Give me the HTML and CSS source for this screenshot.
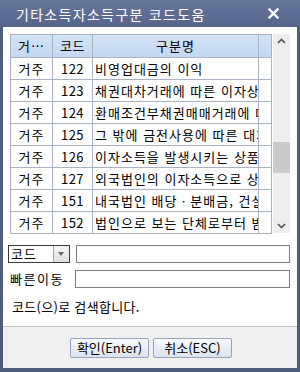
FILE: index.html
```html
<!DOCTYPE html>
<html lang="ko">
<head>
<meta charset="utf-8">
<link rel="stylesheet" href="styles.css">
</head>
<body>
<div class="window">
  <div class="titlebar">
    <span class="title">기타소득자소득구분 코드도움</span>
    <svg class="close" width="11" height="11" viewBox="0 0 11 11"><path d="M1.5 1.5 L9.5 9.5 M9.5 1.5 L1.5 9.5" stroke="#fff" stroke-width="2.4" stroke-linecap="square"/></svg>
  </div>
  <div class="content">
    <div class="gridwrap">
      <div class="grid">
        <div class="row head">
          <div class="c1">거…</div><div class="c2">코드</div><div class="c3 center">구분명</div>
        </div>
        <div class="row"><div class="c1">거주</div><div class="c2">122</div><div class="c3">비영업대금의 이익</div></div>
        <div class="row"><div class="c1">거주</div><div class="c2">123</div><div class="c3">채권대차거래에 따른 이자상당액</div></div>
        <div class="row"><div class="c1">거주</div><div class="c2">124</div><div class="c3">환매조건부채권매매거래에 따른 이자</div></div>
        <div class="row"><div class="c1">거주</div><div class="c2">125</div><div class="c3">그 밖에 금전사용에 따른 대가</div></div>
        <div class="row"><div class="c1">거주</div><div class="c2">126</div><div class="c3">이자소득을 발생시키는 상품</div></div>
        <div class="row"><div class="c1">거주</div><div class="c2">127</div><div class="c3">외국법인의 이자소득으로 상당</div></div>
        <div class="row"><div class="c1">거주</div><div class="c2">151</div><div class="c3">내국법인 배당ㆍ분배금, 건설이자</div></div>
        <div class="row"><div class="c1">거주</div><div class="c2">152</div><div class="c3">법인으로 보는 단체로부터 받는</div></div>
      </div>
      <div class="scrollbar">
        <svg class="arrow" width="17" height="14" viewBox="0 0 17 14"><polyline points="5,9 8.5,5.5 12,9" fill="none" stroke="#555" stroke-width="1.6"/></svg>
        <div class="track"><div class="thumb"></div></div>
        <svg class="arrow" width="17" height="14" viewBox="0 0 17 14"><polyline points="5,5 8.5,8.5 12,5" fill="none" stroke="#555" stroke-width="1.6"/></svg>
      </div>
    </div>
    <div class="form">
      <div class="frow">
        <div class="select"><span class="sval">코드</span><span class="sarrow"><svg width="6" height="4" viewBox="0 0 6 4"><path d="M0 0 H6 L3 4 Z" fill="#666"/></svg></span></div>
        <div class="input"></div>
      </div>
      <div class="frow">
        <span class="label">빠른이동</span>
        <div class="input"></div>
      </div>
      <div class="hint">코드(으)로 검색합니다.</div>
    </div>
  </div>
  <div class="footer">
    <button class="btn">확인(Enter)</button>
    <button class="btn">취소(ESC)</button>
  </div>
</div>
</body>
</html>
```

FILE: styles.css
```css
* { box-sizing: border-box; }
html, body { margin: 0; padding: 0; }
body {
  width: 300px;
  height: 372px;
  font-family: "Noto Sans CJK KR", "Noto Sans", sans-serif;
  font-size: 13px;
  color: #000;
  overflow: hidden;
}
.window {
  width: 300px;
  height: 372px;
  background: #4e5c7e;
  padding: 0 3px 4px 3px;
  display: flex;
  flex-direction: column;
}
.titlebar {
  height: 27px;
  margin: 0 -3px;
  padding: 0 21px 0 16px;
  background: linear-gradient(#67779c, #55648a);
  color: #fff;
  display: flex;
  align-items: center;
  justify-content: space-between;
  font-size: 14px;
  line-height: 1;
}
.title { letter-spacing: 1.3px; }
.close { display: block; }
.content {
  background: #fff;
  flex: 1;
  padding: 7px 7px 0 7px;
  border-bottom: 1px solid #c4c4c4;
}
.gridwrap {
  display: flex;
  gap: 1px;
}
.grid {
  width: 263px;
  border: 1px solid #aab2c4;
  border-bottom: none;
}
.row {
  display: flex;
  height: 22px;
  border-bottom: 1px solid #aab2c4;
  line-height: 21px;
  white-space: nowrap;
}
.row.head {
  height: 23px;
  line-height: 22px;
  background: linear-gradient(#d3e3f7, #c5d8f2);
}
.row.head > div { background: inherit; }
.c1, .c2, .c3 {
  border-right: 1px solid #aab2c4;
  overflow: hidden;
  text-overflow: clip;
}
.c1 { width: 42px; text-align: center; letter-spacing: 1px; }
.c2 { width: 40px; text-align: center; letter-spacing: 0.5px; }
.c3 { width: 166px; padding-left: 2px; letter-spacing: 1px; }
.c3.center { text-align: center; padding-left: 0; }
.scrollbar {
  width: 17px;
  height: 199px;
  background: #eeeeee;
  display: flex;
  flex-direction: column;
}
.arrow { display: block; flex: none; }
.track { flex: 1; position: relative; }
.thumb {
  position: absolute;
  left: 0;
  right: 0;
  top: 94px;
  height: 31px;
  background: #cbcbcb;
}
.form {
  padding: 11px 0 0 0;
}
.frow {
  display: flex;
  align-items: center;
  height: 18px;
  margin-bottom: 7px;
}
.select {
  width: 62px;
  height: 18px;
  margin-left: -2px;
  border: 1px solid #3c3c3c;
  display: flex;
  margin-right: 6px;
}
.sval { flex: 1; line-height: 16px; padding-left: 2px; letter-spacing: 1px; }
.sarrow {
  width: 16px;
  border-left: 1px solid #a8a8a8;
  background: linear-gradient(#f6f6f6, #dedede);
  display: flex;
  align-items: center;
  justify-content: center;
}
.sarrow svg { display: block; }
.label { width: 65px; line-height: 18px; letter-spacing: 1.5px; }
.input {
  width: 215px;
  height: 18px;
  border: 1px solid #7d7d7d;
  background: #fff;
}
.hint {
  margin-top: 11px;
  padding-left: 2px;
  line-height: 16px;
  letter-spacing: 0.3px;
}
.footer {
  height: 41px;
  background: #f0f0f0;
  display: flex;
  justify-content: center;
  align-items: flex-start;
  gap: 4px;
  padding-top: 11px;
  padding-left: 2px;
}
.btn {
  width: 79px;
  height: 20px;
  padding: 0;
  font-family: inherit;
  font-size: 13px;
  color: #000;
  border: 1px solid #98a4bc;
  border-radius: 2px;
  background: linear-gradient(#f7f9fc, #dde3ee);
  line-height: 18px;
}
```
